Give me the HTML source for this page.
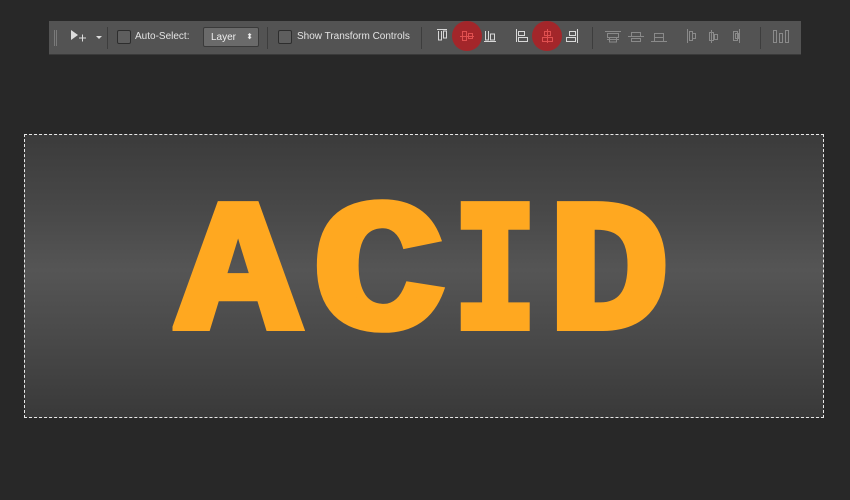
<!DOCTYPE html>
<html><head><meta charset="utf-8"><style>
html,body{margin:0;padding:0;width:850px;height:500px;overflow:hidden;background:#282828;font-family:"Liberation Sans",sans-serif;}
#tb{position:absolute;left:49px;top:21px;width:752px;height:33px;background:#535353;border-bottom:1px solid #3a3a3a;}
#cv{position:absolute;left:24px;top:134px;width:798px;height:282px;border:1px dashed #e8e8e8;
background:linear-gradient(#3b3b3b 0%,#4a4a4a 30%,#555 48%,#4a4a4a 70%,#393939 100%);overflow:hidden;}
.L{position:absolute;top:51px;font-family:"Liberation Mono",monospace;font-weight:bold;font-size:185px;line-height:185px;color:#ffa820;-webkit-text-stroke:8px #ffa820;white-space:nowrap;transform-origin:0 0;}
.lbl{position:absolute;top:10px;font-size:10px;color:#e4e4e4;}
.cb{position:absolute;top:9px;width:12px;height:12px;border:1px solid #2d2d2d;background:#5e5e5e;border-radius:2px;}
</style></head><body>
<div id="tb">
<svg width="752" height="33" style="position:absolute;left:0;top:0">
<g fill="#7a7a7a"><rect x="5" y="9" width="1" height="16"/><rect x="7" y="9" width="1" height="16"/></g>
<path d="M22 9 L22 19 L29 14 Z" fill="#ddd"/>
<path d="M30 17h7M33.5 13.5v7" stroke="#ddd" stroke-width="1"/>
<path d="M47 15h6l-3 3z" fill="#ddd"/>
<rect x="58" y="6" width="1" height="22" fill="#3d3d3d"/>
<rect x="218" y="6" width="1" height="22" fill="#3d3d3d"/>
<rect x="372" y="6" width="1" height="22" fill="#3d3d3d"/>
<rect x="543" y="6" width="1" height="22" fill="#3d3d3d"/>
<rect x="711" y="6" width="1" height="22" fill="#3d3d3d"/>
<circle cx="418" cy="15" r="15" fill="#a3262a"/>
<circle cx="498" cy="15" r="15" fill="#a3262a"/>
<g fill="none" stroke="#d8d8d8" stroke-width="1">
<path d="M388 8.5h10M389.5 10v9h3v-9M394.5 10h3v7h-3z"/>
<path d="M411 15.5h14M413.5 10.5h4v9h-4zM419.5 12.5h4v5h-4z" stroke="#e05050"/>
<path d="M436.5 10v9h3v-9M441.5 13h4v6h-4zM435 20.5h12"/>
<path d="M467.5 8v13M469.5 10.5h6v4h-6zM469.5 16.5h9v4h-9z"/>
<path d="M498.5 8v14M495.5 10.5h6v4h-6zM493.5 16.5h10v4h-10z" stroke="#e05050"/>
<path d="M528.5 8v14M520.5 10.5h6v4h-6zM517.5 16.5h9v4h-9z"/>
</g>
<g fill="none" stroke="#8a8a8a" stroke-width="1">
<path d="M556 10.5h16M558.5 12.5h11v4h-11zM558 18.5h12M560.5 16v5h7v-5"/>
<path d="M579 15.5h16M582.5 11.5h9v4h-9zM582.5 17.5h9v3h-9z"/>
<path d="M602 20.5h16M605.5 12.5h9v4h-9zM605.5 16.5h9v4h-9z"/>
<path d="M638.5 8v14M640.5 10.5h3v9h-3zM643.5 12.5h3v5h-3z"/>
<path d="M662.5 9v13M660.5 11.5h4v8h-4zM665.5 13.5h3v5h-3z"/>
<path d="M690.5 8v14M684.5 10.5h4v9h-4zM686.5 12.5h3v5h-3z"/>
<path d="M724.5 9.5h3v12h-3zM730.5 12.5h3v9h-3zM736.5 9.5h3v12h-3z"/>
</g>
</svg>
<div class="cb" style="left:68px"></div>
<div class="lbl" style="left:86px">Auto-Select:</div>
<div style="position:absolute;left:154px;top:6px;width:54px;height:18px;background:#6a6a6a;border:1px solid #3a3a3a;border-radius:2px;font-size:10px;color:#eee;line-height:20px;text-indent:7px">Layer<span style="position:absolute;right:5px;top:0;font-size:8px;line-height:18px">&#x2B0D;</span></div>
<div class="cb" style="left:229px"></div>
<div class="lbl" style="left:248px">Show Transform Controls</div>
</div>
<div id="cv">
<div class="L" style="left:152px;transform:scaleX(1.1)">A</div>
<div class="L" style="left:288px;transform:scaleX(1.19)">C</div>
<div class="L" style="left:428px;transform:scaleX(0.76)">I</div>
<div class="L" style="left:523px;transform:scaleX(1.09)">D</div>
</div>
</body></html>
